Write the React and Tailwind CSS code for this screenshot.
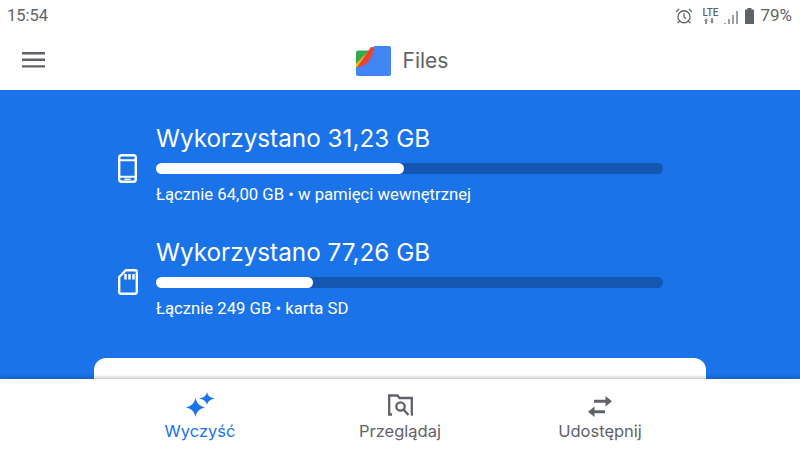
import React from "react";
import { AlarmClock } from "lucide-react";

const font = "font-['Roboto',sans-serif]";

const StorageRow = ({ icon, title, percent, note }) => (
  <div className="flex items-center h-[100px]">
    <div className="w-[62px] pl-[24px] pt-[12px] text-white">{icon}</div>
    <div className="w-[507px]">
      <div className="pt-[2px] text-[24.3px] leading-[32px] text-white font-['Inter',sans-serif] font-normal">{title}</div>
      <div className="mt-[9px] h-[11px] w-full rounded-full bg-[#1557b0]">
        <div className="h-full rounded-full bg-white" style={{ width: percent + "%" }} />
      </div>
      <div className="mt-[11px] text-[16.7px] leading-[20px] text-white">{note}</div>
    </div>
  </div>
);

const PhoneIcon = () => (
  <svg width="19" height="29" viewBox="0 0 19 29" fill="none">
    <rect x="1.200" y="1.200" width="16.600" height="26.600" rx="2.500" stroke="currentColor" strokeWidth="2.400" />
    <path d="M1.500 6.200h16M1.500 22.800h16" stroke="currentColor" strokeWidth="2" />
    <path d="M6.500 25.300h6" stroke="currentColor" strokeWidth="1.600" />
  </svg>
);

const SdIcon = () => (
  <svg width="20" height="26" viewBox="0 0 20 26" fill="none">
    <path d="M8 1.200h9a1.800 1.800 0 0 1 1.800 1.800v20a1.800 1.800 0 0 1-1.800 1.800H3A1.800 1.800 0 0 1 1.200 23V8z" stroke="currentColor" strokeWidth="2.400" strokeLinejoin="round" />
    <path d="M7.500 5v5.500M11.500 5v5.500M15.500 5v5.500" stroke="currentColor" strokeWidth="2.500" />
  </svg>
);

const FilesLogo = () => (
  <svg width="35" height="30" viewBox="0 0 35 30">
    <path d="M2 4.500h12L0 19V6.500a2 2 0 0 1 2-2z" fill="#34a853" />
    <path d="M13 4.500h3L2 22H0v-4z" fill="#fbbc04" />
    <path d="M15 1h4v16L3 23 1 21z" fill="#ea4335" />
    <path d="M18 0h15a2 2 0 0 1 2 2v26a2 2 0 0 1-2 2H2a2 2 0 0 1-2-2v-7c8 1 17-6 18-21z" fill="#4285f4" />
  </svg>
);

const SparkleIcon = () => (
  <svg width="29" height="25" viewBox="0 0 29 25" fill="#1a73e8">
    <path d="M9.500 6c1.200 5 3.500 7.500 9.500 9.500-6 1.500-8.300 4-9.500 9.500C8.300 19.500 6 17 0 15.500 6 13.500 8.300 11 9.500 6z" />
    <path d="M21 0c.8 3.700 2.400 5.300 8 6.500-5.600 1.300-7.200 3-8 6.500-.8-3.500-2.400-5.200-8-6.500 5.600-1.200 7.200-2.800 8-6.500z" />
  </svg>
);

const BrowseIcon = () => (
  <svg width="25" height="23" viewBox="0 0 25 23" fill="none" stroke="#5f6368" strokeWidth="2.300">
    <path d="M4 20.500H1.200V1.500h8.300l2 2.500h12.300v16.500H23" />
    <circle cx="12.500" cy="12.500" r="4.200" />
    <path d="M15.500 15.500l5 5.500" />
  </svg>
);

const SwapIcon = () => (
  <svg width="24" height="21" viewBox="0 0 24 21" fill="#5f6368">
    <path d="M6.500 21L0 15.800l6.500-5.300v3.800H17v3H6.500zM17.500 10.500L24 5.300 17.500 0v3.800H6v3h11.500z" />
  </svg>
);

const NavItem = ({ icon, label, active }) => (
  <div className="flex flex-col items-center justify-start">
    <div className="h-[28px] flex items-end justify-center">{icon}</div>
    <div className={`mt-[3px] text-[16.5px] leading-[22px] font-['Inter',sans-serif] ${active ? "text-[#1a73e8]" : "text-[#5f6368]"}`}>
      {label}
    </div>
  </div>
);

export default function App() {
  return (
    <div className={`w-[800px] h-[450px] overflow-hidden flex flex-col bg-white ${font}`}>
      {/* Status bar */}
      <div className="h-[31px] pt-[1px] flex items-center justify-between pl-[7px] pr-[8px] text-[#5f6368]">
        <span className="text-[16.5px]">15:54</span>
        <div className="flex items-center">
          <AlarmClock size={18} strokeWidth={1.7} />
          <div className="ml-[9px] w-[16px] flex flex-col items-center">
            <span className="text-[10px] leading-[10px] font-medium">LTE</span>
            <svg width="12" height="6" viewBox="0 0 12 6" fill="#5f6368">
              <path d="M1 6V3H0l2-3 2 3H3v3zM7 0v3H6l2 3 2-3H9V0z" opacity="0.75" />
            </svg>
          </div>
          <svg className="ml-[6px]" width="15" height="16" viewBox="0 0 15 16" fill="#9aa0a6">
            <path d="M0 15h2v1H0zM4 11h2v5H4zM8 7h2v9H8zM12 3h2v13h-2z" />
          </svg>
          <svg className="ml-[6px]" width="9" height="16" viewBox="0 0 9 16" fill="#5f6368">
            <path d="M2.500 0h4v1.500H9V16H0V1.500h2.500z" />
          </svg>
          <span className="ml-[6px] text-[17px]">79%</span>
        </div>
      </div>

      {/* App bar */}
      <div className="h-[59px] pl-[4px] relative flex items-center justify-center">
        <svg className="absolute left-[22px] top-[21px]" width="23" height="16" viewBox="0 0 23 16" fill="#5f6368">
          <path d="M0 0h23v2.400H0zM0 6.600h23V9H0zM0 13.200h23v2.400H0z" />
        </svg>
        <FilesLogo />
        <span className="ml-[12px] text-[21px] text-[#5f6368] font-['Inter',sans-serif]">Files</span>
      </div>

      {/* Blue storage panel */}
      <div className="h-[289px] bg-[#1a73e8] overflow-hidden pt-[22px] flex flex-col items-center">
        <div className="w-[569px] ml-[-43px] flex flex-col gap-[14px]">
          <StorageRow icon={<PhoneIcon />} title="Wykorzystano 31,23 GB" percent={49} note="Łącznie 64,00 GB • w pamięci wewnętrznej" />
          <StorageRow icon={<SdIcon />} title="Wykorzystano 77,26 GB" percent={31} note="Łącznie 249 GB • karta SD" />
        </div>
        <div className="mt-[32px] w-[612px] h-[40px] shrink-0 rounded-t-[12px] bg-white" />
      </div>

      {/* Bottom nav */}
      <div className="h-[71px] grid grid-cols-3 px-[100px] pt-[10px] bg-white shadow-[0_-2px_3px_rgba(0,0,0,0.2)] relative">
        <NavItem icon={<SparkleIcon />} label="Wyczyść" active />
        <NavItem icon={<BrowseIcon />} label="Przeglądaj" />
        <NavItem icon={<SwapIcon />} label="Udostępnij" />
      </div>
    </div>
  );
}
